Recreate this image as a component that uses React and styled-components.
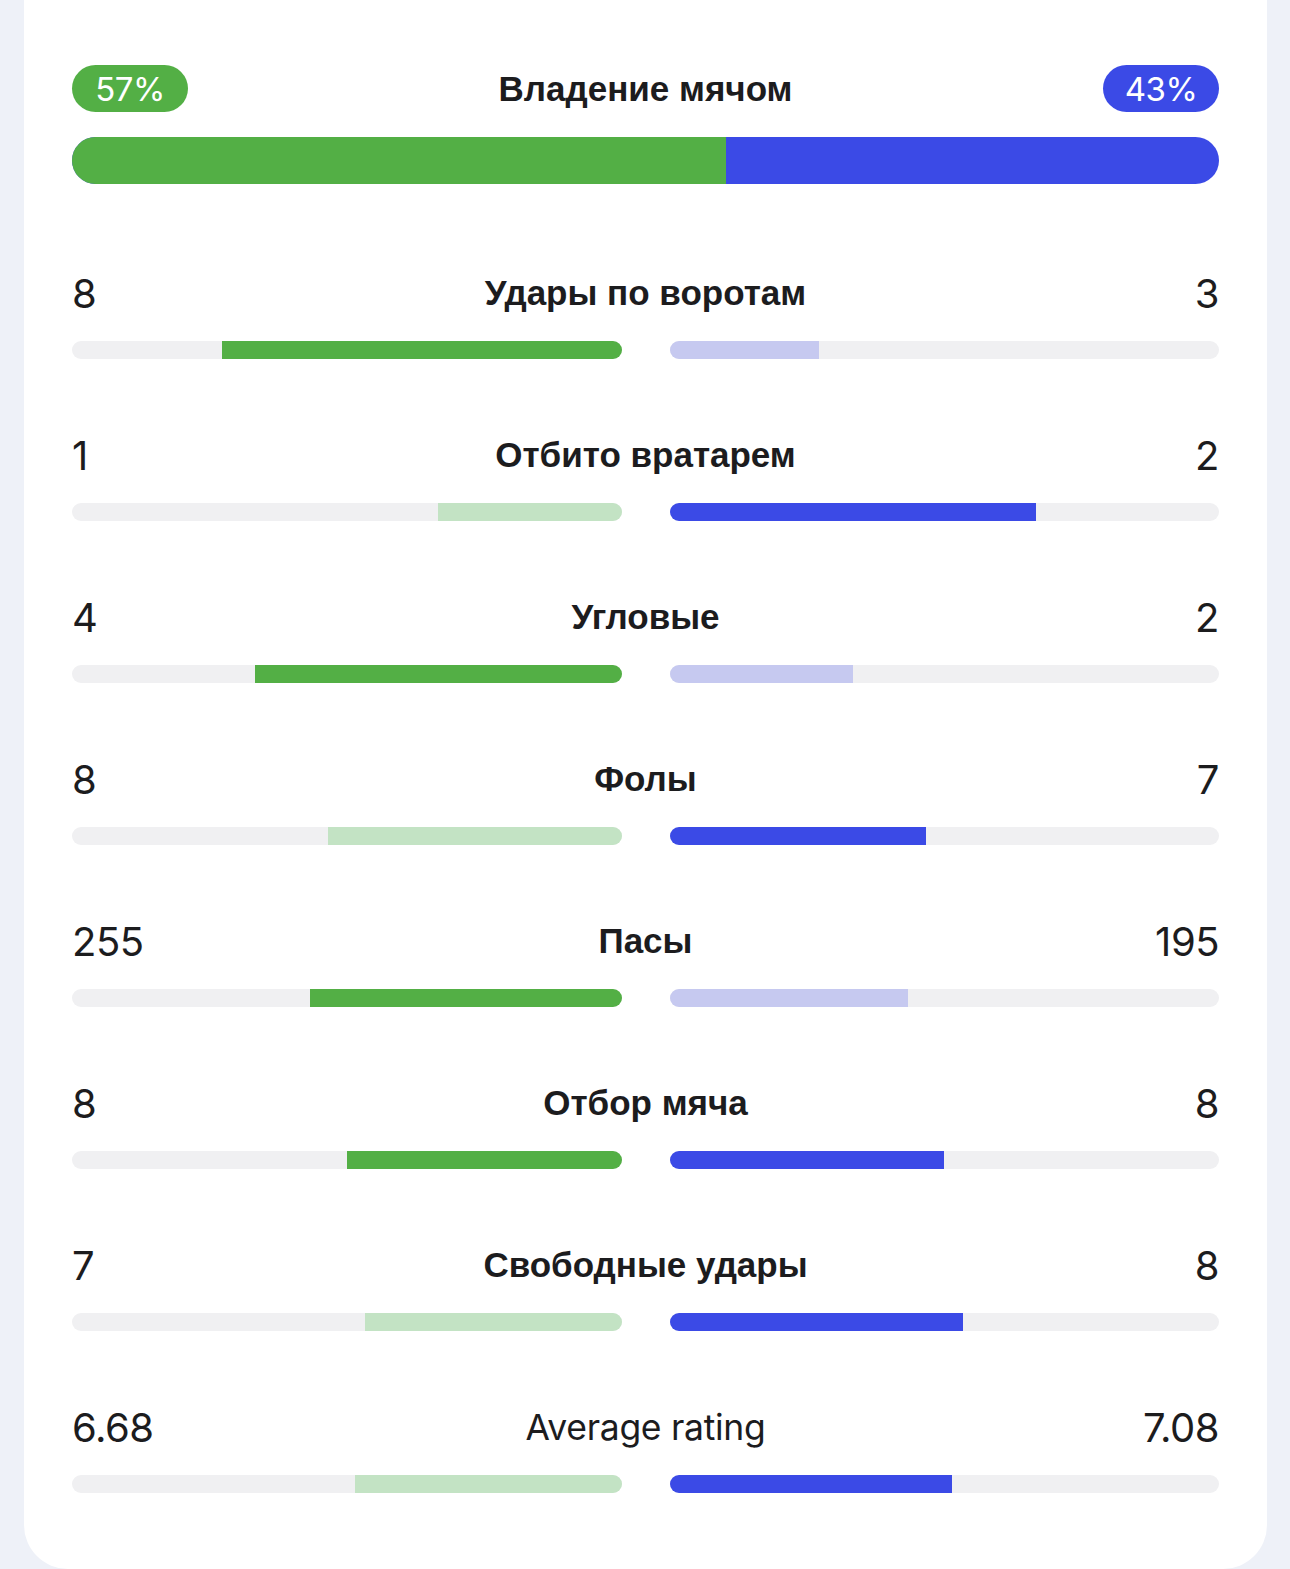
import React from "react";
import styled, { createGlobalStyle } from "styled-components";

const GREEN = "#53af45";
const GREEN_LIGHT = "#c3e3c4";
const BLUE = "#3b4ae6";
const BLUE_LIGHT = "#c6c9f0";
const TRACK = "#f0f0f2";

const Global = createGlobalStyle`
  html, body { margin: 0; padding: 0; background: #eef1f8; }
  body { font-family: Inter, "Noto Sans", sans-serif; color: #1c1c1e; }
`;

const Page = styled.div`
  padding: 0 23px 0 24px;
`;

const Card = styled.section`
  background: #ffffff;
  border-radius: 0 0 44px 44px;
  padding: 65px 48px 76px;
  display: flex;
  flex-direction: column;
  gap: 72px;
`;

const Possession = styled.div`
  display: flex;
  flex-direction: column;
  gap: 25px;
  margin-bottom: 13px;
`;

const PossHeader = styled.div`
  display: flex;
  align-items: center;
  justify-content: space-between;
  height: 47px;
`;

const Pill = styled.span`
  display: inline-flex;
  align-items: center;
  justify-content: center;
  width: 116px;
  height: 47px;
  border-radius: 24px;
  background: ${(p) => p.$color};
  color: #fff;
  font-family: Inter, sans-serif;
  font-size: 33px;
  font-weight: 400;
  letter-spacing: -0.5px;
`;

const Title = styled.h3`
  margin: 0;
  font-family: ${(p) => (p.$latin ? 'Inter, sans-serif' : '"Liberation Sans", Arial, sans-serif')};
  font-weight: ${(p) => (p.$latin ? 400 : 700)};
  font-size: ${(p) => (p.$latin ? "35.5px" : "35px")};
  letter-spacing: ${(p) => (p.$latin ? "-0.3px" : "0")};
  color: #1c1c1e;
  text-align: center;
  flex: 1;
`;

const BigBar = styled.div`
  display: flex;
  height: 47px;
  border-radius: 24px;
  overflow: hidden;
  background: ${BLUE};
`;

const BigFill = styled.div`
  background: ${GREEN};
  height: 100%;
`;

const Stat = styled.div`
  display: flex;
  flex-direction: column;
  gap: 24px;
`;

const StatHeader = styled.div`
  display: flex;
  align-items: center;
  height: 48px;
`;

const Value = styled.span`
  font-family: Inter, sans-serif;
  font-weight: 400;
  font-size: 40px;
  letter-spacing: -0.5px;
  min-width: 160px;
  text-align: ${(p) => (p.$right ? "right" : "left")};
`;

const Bars = styled.div`
  display: grid;
  grid-template-columns: 1fr 1fr;
  column-gap: 48px;
`;

const Track = styled.div`
  height: 18px;
  border-radius: 9px;
  background: ${TRACK};
  overflow: hidden;
  display: flex;
  justify-content: ${(p) => (p.$right ? "flex-start" : "flex-end")};
`;

const Fill = styled.div`
  height: 100%;
  background: ${(p) => p.$color};
`;

const stats = [
  { title: "Удары по воротам", a: 8, b: 3 },
  { title: "Отбито вратарем", a: 1, b: 2 },
  { title: "Угловые", a: 4, b: 2 },
  { title: "Фолы", a: 8, b: 7, lowerBetter: true },
  { title: "Пасы", a: 255, b: 195 },
  { title: "Отбор мяча", a: 8, b: 8 },
  { title: "Свободные удары", a: 7, b: 8 },
  { title: "Average rating", a: 6.68, b: 7.08, latin: true, fmt: (v) => v.toFixed(2) },
];

function StatRow({ s }) {
  const total = s.a + s.b;
  const pa = (s.a / total) * 100;
  const pb = (s.b / total) * 100;
  const aWins = s.lowerBetter ? s.a <= s.b : s.a >= s.b;
  const bWins = s.lowerBetter ? s.b <= s.a : s.b >= s.a;
  const aColor = aWins ? GREEN : GREEN_LIGHT;
  const bColor = bWins ? BLUE : BLUE_LIGHT;
  const f = s.fmt || ((v) => String(v));
  return (
    <Stat>
      <StatHeader>
        <Value>{f(s.a)}</Value>
        <Title $latin={s.latin}>{s.title}</Title>
        <Value $right>{f(s.b)}</Value>
      </StatHeader>
      <Bars>
        <Track>
          <Fill $color={aColor} style={{ width: `${pa}%` }} />
        </Track>
        <Track $right>
          <Fill $color={bColor} style={{ width: `${pb}%` }} />
        </Track>
      </Bars>
    </Stat>
  );
}

export default function App() {
  return (
    <Page>
      <Global />
      <Card>
        <Possession>
          <PossHeader>
            <Pill $color={GREEN}>57%</Pill>
            <Title>Владение мячом</Title>
            <Pill $color={BLUE}>43%</Pill>
          </PossHeader>
          <BigBar>
            <BigFill style={{ width: "57%" }} />
          </BigBar>
        </Possession>
        {stats.map((s) => (
          <StatRow key={s.title} s={s} />
        ))}
      </Card>
    </Page>
  );
}
